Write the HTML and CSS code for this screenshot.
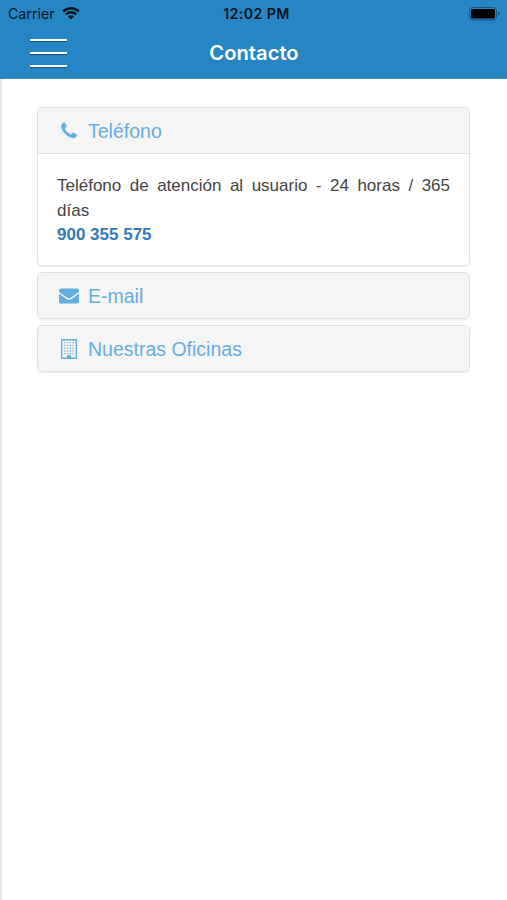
FILE: index.html
```
<!DOCTYPE html>
<html lang="es">
<head>
    <meta charset="UTF-8">
    <meta name="viewport" content="width=device-width, initial-scale=1.0">
    <title>Contacto</title>
    <link rel="stylesheet" href="styles.css">
</head>
<body>
    <header class="cabecera">
        <div class="estado">
            <div class="operador">
                <span class="operador-nombre">Carrier</span>
                <svg class="wifi" viewBox="0 0 18 13">
                    <path d="M1.1 4.4a11.4 11.4 0 0 1 15.8 0M3.8 7.4a7.5 7.5 0 0 1 10.4 0" fill="none" stroke="#06131d" stroke-width="2.4"/>
                    <path d="M9 12.6 5.9 9.6a4.8 4.8 0 0 1 6.2 0z" fill="#06131d"/>
                </svg>
            </div>
            <span class="hora">12:02 PM</span>
            <svg class="bateria" viewBox="0 0 32 14">
                <rect x=".5" y=".5" width="27" height="12.5" rx="3" fill="none" stroke="#17527a"/>
                <rect x="2" y="2" width="24" height="9.5" rx="1.5" fill="#000"/>
                <path d="M29.3 4.8q1.6.6 1.6 2t-1.6 2z" fill="#17527a"/>
            </svg>
        </div>
        <div class="barra">
            <div class="menu"><span></span><span></span><span></span></div>
            <h1>Contacto</h1>
        </div>
    </header>

    <main class="contenedor">
        <section class="panel">
            <h2 class="panel-titulo">
                <svg class="icono" viewBox="0 0 1792 1792"><path d="M1600 1240q0 27-10 70.5t-21 68.5q-21 50-122 106-94 51-186 51-27 0-53-3.5t-57.5-12.5-47-14.5-55.5-20.5-49-18q-98-35-175-83-127-79-264-216t-216-264q-48-77-83-175-3-9-18-49t-20.5-55.5-14.5-47-12.5-57.5-3.5-53q0-92 51-186 56-101 106-122 25-11 68.5-21t70.5-10q14 0 21 3 18 6 53 76 11 19 30 54t35 63.5 31 53.5q3 4 17.5 25t21.5 35.5 7 28.5q0 20-28.5 50t-62 55-62 53-28.5 46q0 9 5 22.5t8.5 20.5 14 24 11.5 19q76 137 174 235t235 174q2 1 19 11.5t24 14 20.5 8.5 22.5 5q18 0 46-28.5t53-62 55-62 50-28.5q14 0 28.5 7t35.5 21.5 25 17.5q25 15 53.5 31t63.5 35 54 30q70 35 76 53 3 7 3 21z"/></svg>
                <span>Teléfono</span>
            </h2>
            <div class="panel-cuerpo">
                <p>Teléfono de atención al usuario - 24 horas / 365 días</p>
                <a class="numero" href="tel:900355575">900 355 575</a>
            </div>
        </section>
        <section class="panel">
            <h2 class="panel-titulo">
                <svg class="icono" viewBox="0 0 20 20">
                    <path d="M0 4.5Q0 2.5 2 2.5H18Q20 2.5 20 4.5 20 6 18.2 7.2L11.7 11.7Q10 12.7 8.3 11.7L1.8 7.2Q0 6 0 4.5z"/>
                    <path d="M0 7.5Q.5 8 1.2 8.5L7.5 12.9Q10 14.4 12.5 12.9L18.8 8.5Q19.5 8 20 7.5V15.7Q20 17.5 18.2 17.5H1.8Q0 17.5 0 15.7z"/>
                </svg>
                <span>E-mail</span>
            </h2>
        </section>
        <section class="panel">
            <h2 class="panel-titulo">
                <svg class="icono" viewBox="0 0 20 20">
                    <path d="M2.7.7H17.3V19.3H2.7z" fill="none" stroke="#66addf" stroke-width="1.4"/>
                    <path d="M5 3.6H15.2M5 6.4H15.2M5 9.2H15.2M5 12H15.2M5 14.8H15.2" fill="none" stroke="#66addf" stroke-width="1.4" stroke-dasharray="1.4 1.4" opacity=".8"/>
                    <path d="M8 16.2H12V19.5H8z"/>
                </svg>
                <span>Nuestras Oficinas</span>
            </h2>
        </section>
    </main>
</body>
</html>
```
FILE: styles.css
```
* {
    box-sizing: border-box;
}
body {
    font-family: "Liberation Sans", Arial, sans-serif;
    background-color: #fff;
    color: #444;
    margin: 0;
    min-height: 100vh;
    box-shadow: inset 3px 0 2px -1px #e2e2e2;
}
.cabecera {
    height: 79px;
    background: #2686c3;
    border-bottom: 1px solid #3a8cc0;
    font-family: Inter, sans-serif;
}
.estado {
    height: 27px;
    padding: 0 6px 0 8px;
    display: grid;
    grid-template-columns: 1fr auto 1fr;
    align-items: center;
    color: #06131d;
    font-size: 14.2px;
}
.operador {
    display: flex;
    align-items: center;
    gap: 7px;
}
.wifi {
    width: 18px;
    height: 13px;
}
.hora {
    font-weight: 600;
    letter-spacing: 0.4px;
    padding-left: 4px;
}
.bateria {
    width: 32px;
    height: 14px;
    justify-self: end;
}
.barra {
    height: 51px;
    padding: 0 29px 0 30px;
    display: grid;
    grid-template-columns: 1fr auto 1fr;
    align-items: center;
}
.menu {
    width: 37px;
    display: flex;
    flex-direction: column;
    gap: 11px;
}
.menu span {
    height: 2px;
    background: #fff;
    box-shadow: 0 1px 1px #174f75;
}
h1 {
    margin: 0;
    color: #fff;
    font-size: 20.2px;
    font-weight: 600;
}
.contenedor {
    padding: 28px 37px;
    display: flex;
    flex-direction: column;
    gap: 6px;
}
.panel {
    border: 1px solid #e0e0e0;
    border-radius: 5px;
    box-shadow: 0 1px 1px rgba(0, 0, 0, 0.07);
    overflow: hidden;
}
.panel-titulo {
    height: 45px;
    margin: 0;
    padding: 1px 21px 0;
    display: flex;
    align-items: center;
    gap: 9px;
    background: #f5f5f5;
    color: #66addf;
    font-size: 19.5px;
    font-weight: normal;
}
.icono {
    width: 20px;
    height: 20px;
    fill: #66addf;
}
.panel-cuerpo {
    height: 112px;
    padding: 20px 19px 0;
    border-top: 1px solid #e0e0e0;
    font-size: 17px;
    line-height: 24.5px;
}
.panel-cuerpo p {
    margin: 0;
    text-align: justify;
}
.numero {
    color: #337ab7;
    font-weight: bold;
    text-decoration: none;
}
```
